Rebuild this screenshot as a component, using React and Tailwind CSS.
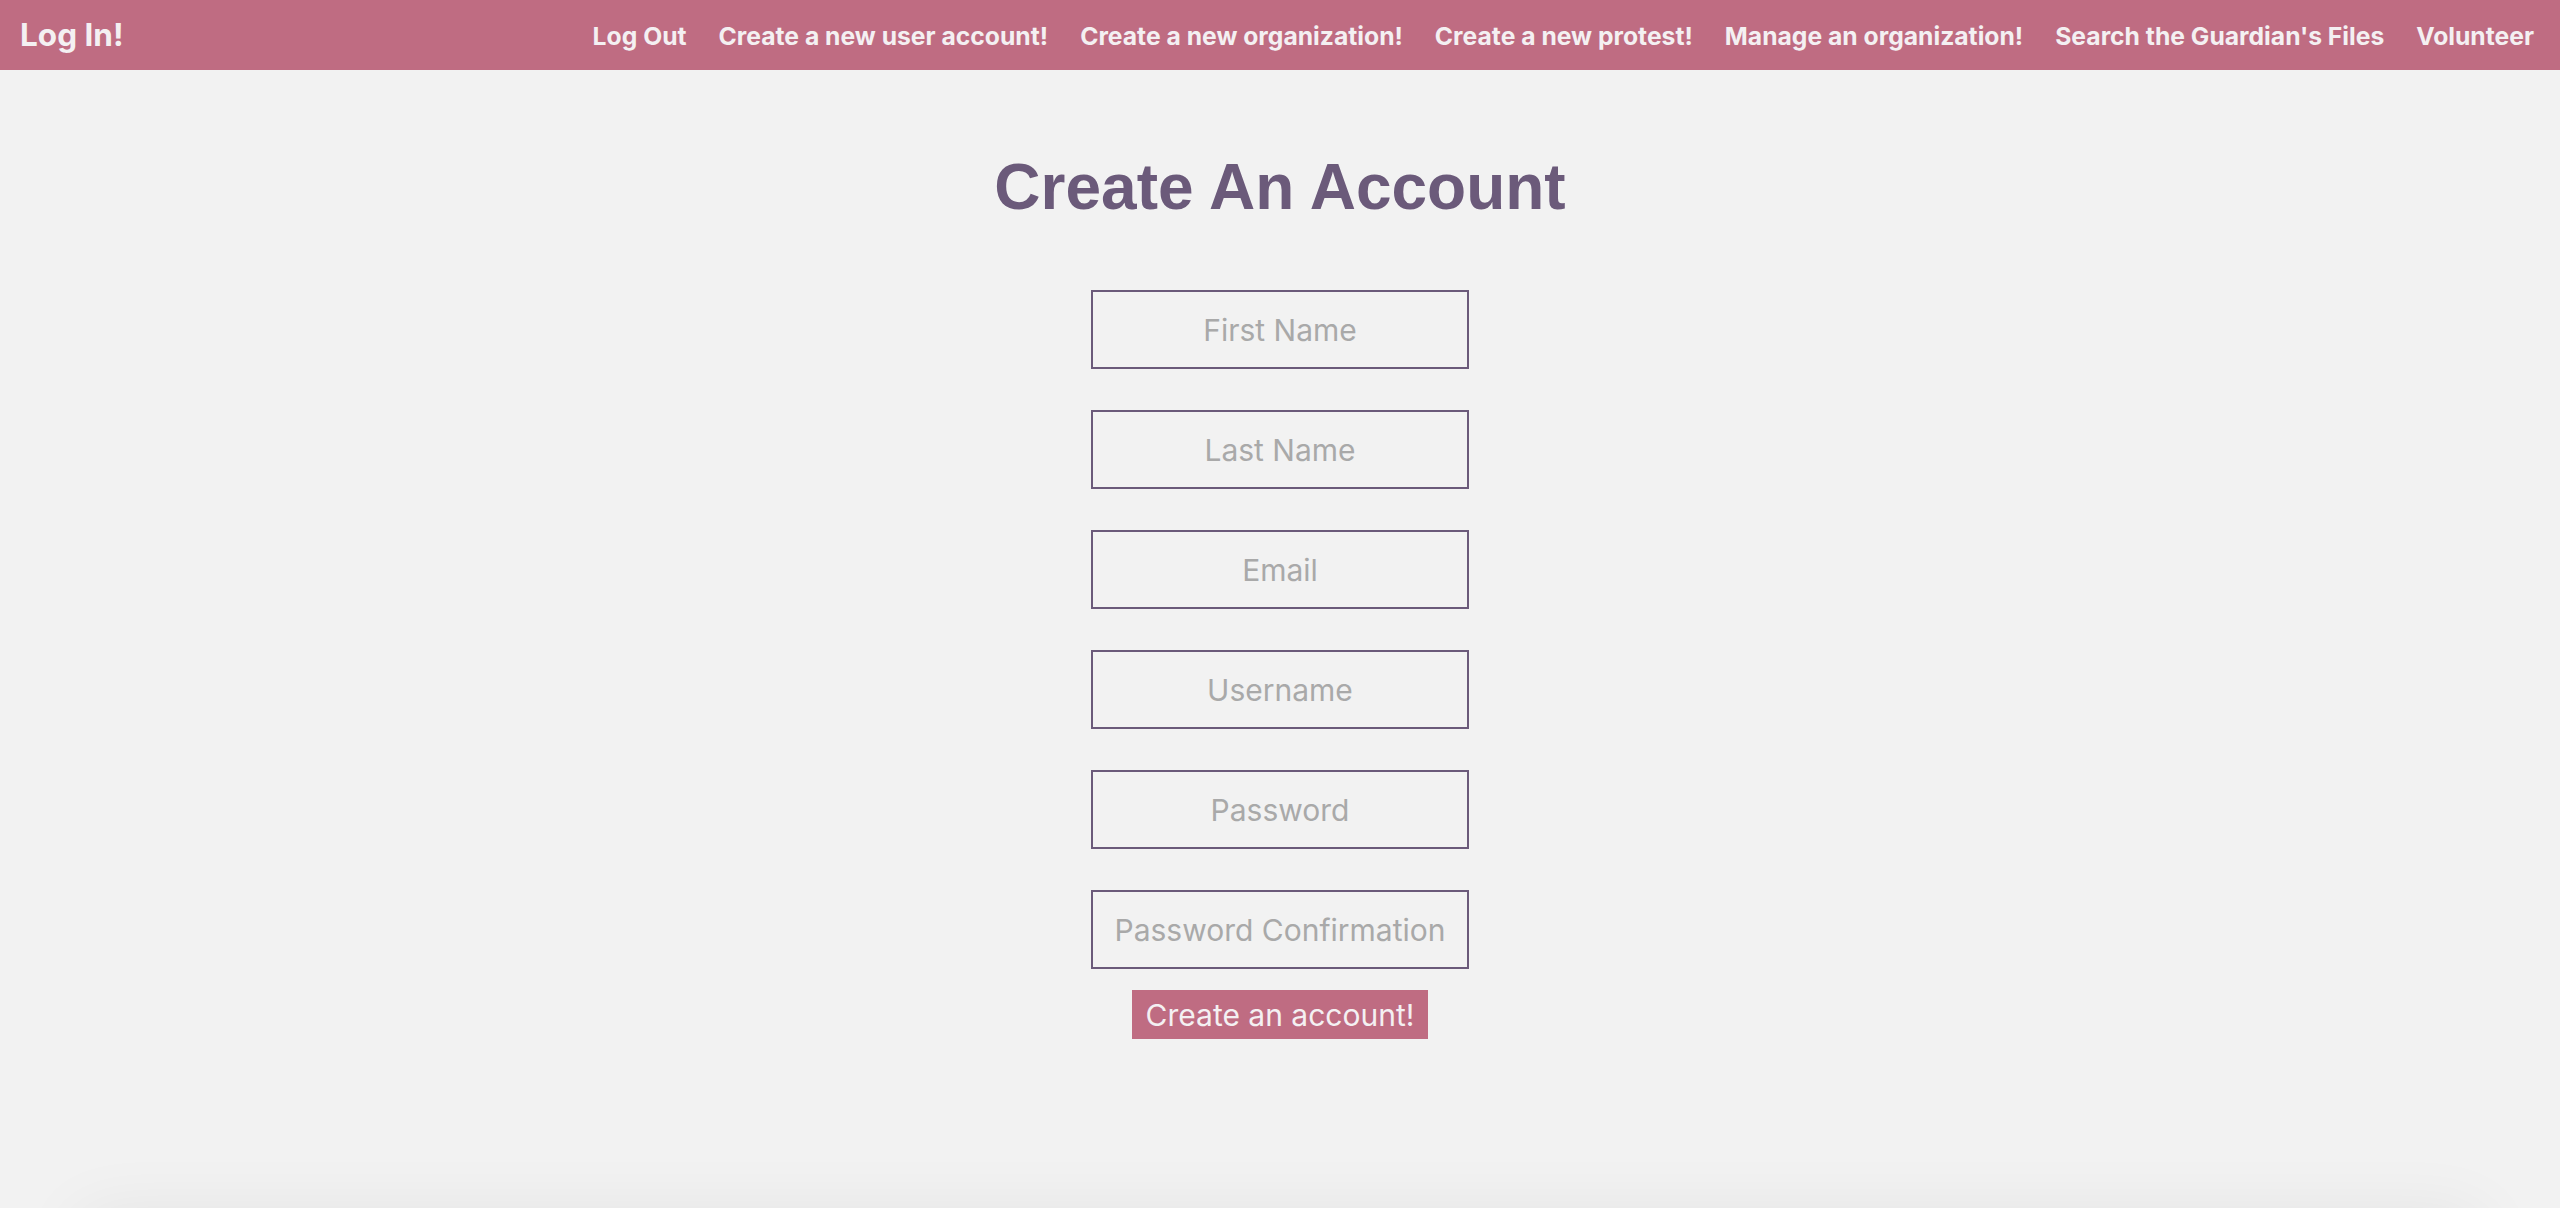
import React from "react";

const links = [
  "Log Out",
  "Create a new user account!",
  "Create a new organization!",
  "Create a new protest!",
  "Manage an organization!",
  "Search the Guardian's Files",
  "Volunteer",
];

const fields = [
  { name: "first_name", placeholder: "First Name", type: "text" },
  { name: "last_name", placeholder: "Last Name", type: "text" },
  { name: "email", placeholder: "Email", type: "email" },
  { name: "username", placeholder: "Username", type: "text" },
  { name: "password", placeholder: "Password", type: "password" },
  { name: "password_confirmation", placeholder: "Password Confirmation", type: "password" },
];

function NavBar() {
  return (
    <nav className="h-[70px] bg-[#bf6c82] flex items-center justify-between pl-5 pr-[26px] font-['Inter',sans-serif] text-[#f4f0f2]">
      <a href="#" className="text-[31.5px] font-bold">
        Log In!
      </a>
      <div className="flex items-center gap-8 pt-1">
        {links.map((l) => (
          <a key={l} href="#" className="text-[24.7px] font-bold">
            {l}
          </a>
        ))}
      </div>
    </nav>
  );
}

export default function App() {
  return (
    <div className="min-h-screen bg-[#f2f2f2] overflow-hidden">
      <NavBar />

      <main className="flex flex-col items-center">
        <h1 className="mt-[79px] text-[64px] leading-[77px] font-bold text-[#6b5a7a] font-['Liberation_Sans',Arial,sans-serif]">
          Create An Account
        </h1>

        {/* Form */}
        <form className="mt-[64px] flex flex-col items-center font-['Inter',sans-serif]">
          <div className="flex flex-col gap-[41px]">
            {fields.map((f) => (
              <input
                key={f.name}
                name={f.name}
                type={f.type}
                placeholder={f.placeholder}
                className="w-[378px] h-[79px] border-2 border-[#6b5a7a] bg-transparent text-center text-[30px] text-[#555] placeholder:text-[#a9a9a9] outline-none"
              />
            ))}
          </div>
          <button
            type="button"
            className="mt-[21px] h-[49px] px-[14px] bg-[#bf6c82] text-[#f4f0f2] text-[30px] leading-none"
          >
            Create an account!
          </button>
        </form>
      </main>

      <footer className="mt-[177px] mx-[80px] h-[200px] bg-[#f2f2f2] shadow-[0_0_70px_rgba(0,0,0,0.07)]" />
    </div>
  );
}
